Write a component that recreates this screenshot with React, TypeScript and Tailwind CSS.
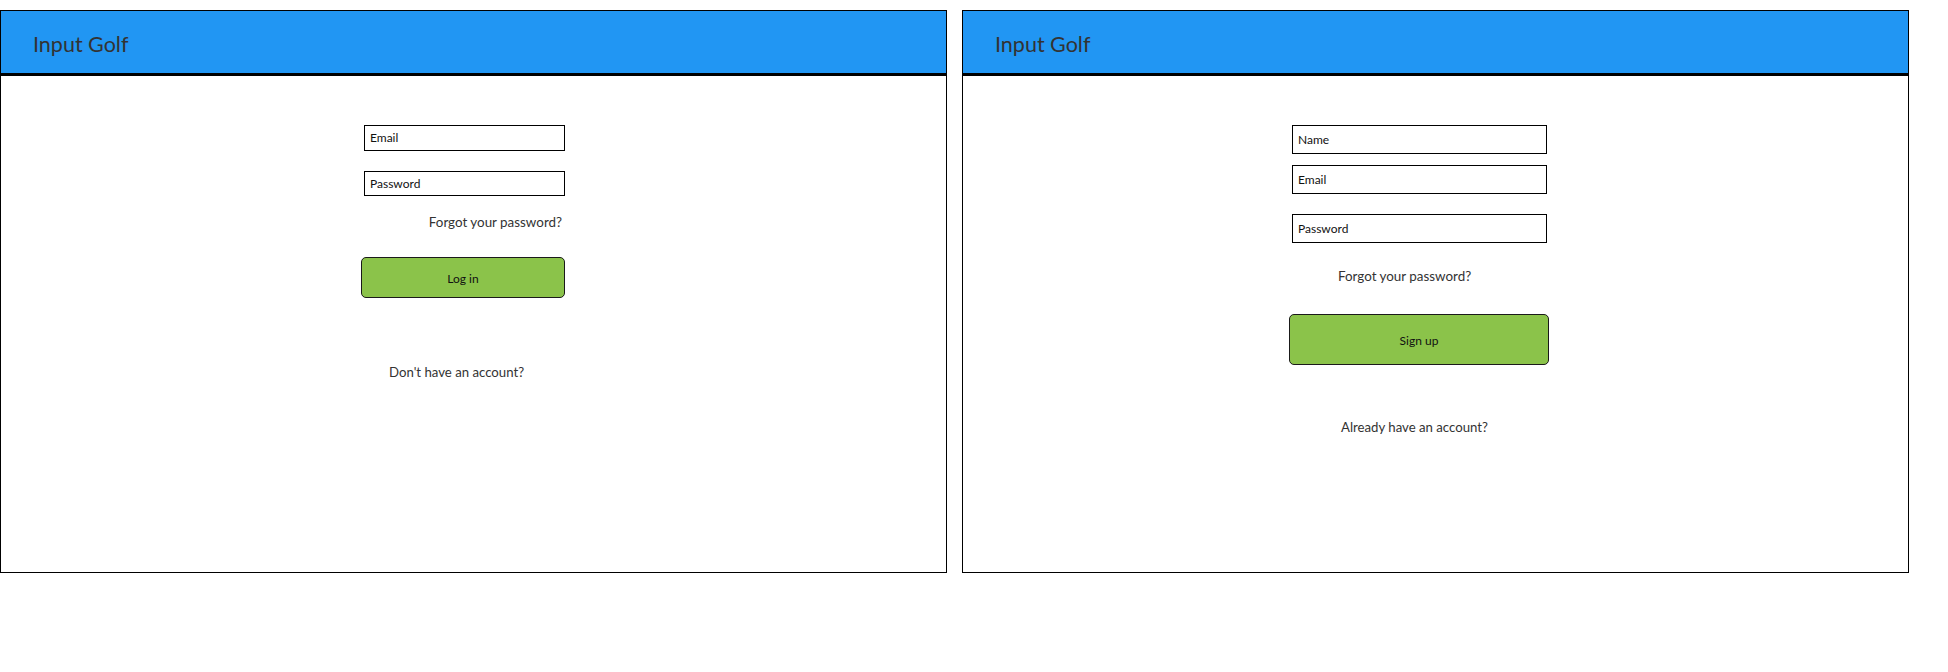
const FONT = { fontFamily: "Lato, 'Noto Sans', sans-serif" };

function Header() {
  return (
    <div className="flex h-[65px] items-center border-b-[3px] border-black bg-[#2196F3] pl-[32px] pt-[4px]">
      <span className="text-[21.5px] text-[#333333]">Input Golf</span>
    </div>
  );
}

function Field({ label, height, width }: { label: string; height: string; width: string }) {
  return (
    <div
      className={`ml-[3px] flex items-center border border-black bg-white px-[5px] text-[12px] text-[#111] ${height} ${width}`}
    >
      {label}
    </div>
  );
}

function LoginPanel() {
  return (
    <div className="flex h-[563px] w-[947px] flex-col border border-black bg-white">
      <Header />
      <div className="ml-[360px] flex w-[204px] flex-col pt-[49px]">
        <Field label="Email" height="h-[26px]" width="w-[201px]" />
        <div className="mt-[20px]">
          <Field label="Password" height="h-[25px]" width="w-[201px]" />
        </div>
        <p className="mt-[17px] pr-[3px] text-right text-[13.4px] leading-[18px] text-[#333333]">
          Forgot your password?
        </p>
        <button
          type="button"
          className="mt-[26px] flex h-[41px] w-[204px] items-center justify-center rounded-[5px] border border-[#1a1a1a] bg-[#8BC34A] pt-[2px] text-[12px] text-[#111]"
        >
          Log in
        </button>
        <p className="ml-[28px] mt-[65px] text-[13.2px] leading-[18px] text-[#333333]">
          Don't have an account?
        </p>
      </div>
    </div>
  );
}

function SignupPanel() {
  return (
    <div className="flex h-[563px] w-[947px] flex-col border border-black bg-white">
      <Header />
      <div className="ml-[326px] flex w-[260px] flex-col pt-[49px]">
        <Field label="Name" height="h-[29px]" width="w-[255px]" />
        <div className="mt-[11px]">
          <Field label="Email" height="h-[29px]" width="w-[255px]" />
        </div>
        <div className="mt-[20px]">
          <Field label="Password" height="h-[29px]" width="w-[255px]" />
        </div>
        <p className="ml-[49px] mt-[24px] text-[13.4px] leading-[18px] text-[#333333]">
          Forgot your password?
        </p>
        <button
          type="button"
          className="mt-[29px] flex h-[51px] w-[260px] items-center justify-center rounded-[5px] border border-[#1a1a1a] bg-[#8BC34A] pt-[2px] text-[12px] text-[#111]"
        >
          Sign up
        </button>
        <p className="ml-[52px] mt-[53px] text-[13.2px] leading-[18px] text-[#333333]">
          Already have an account?
        </p>
      </div>
    </div>
  );
}

export default function App() {
  return (
    <div className="h-[672px] w-[1948px] bg-white pt-[10px]" style={FONT}>
      <div className="flex gap-[15px]">
        <LoginPanel />
        <SignupPanel />
      </div>
    </div>
  );
}
